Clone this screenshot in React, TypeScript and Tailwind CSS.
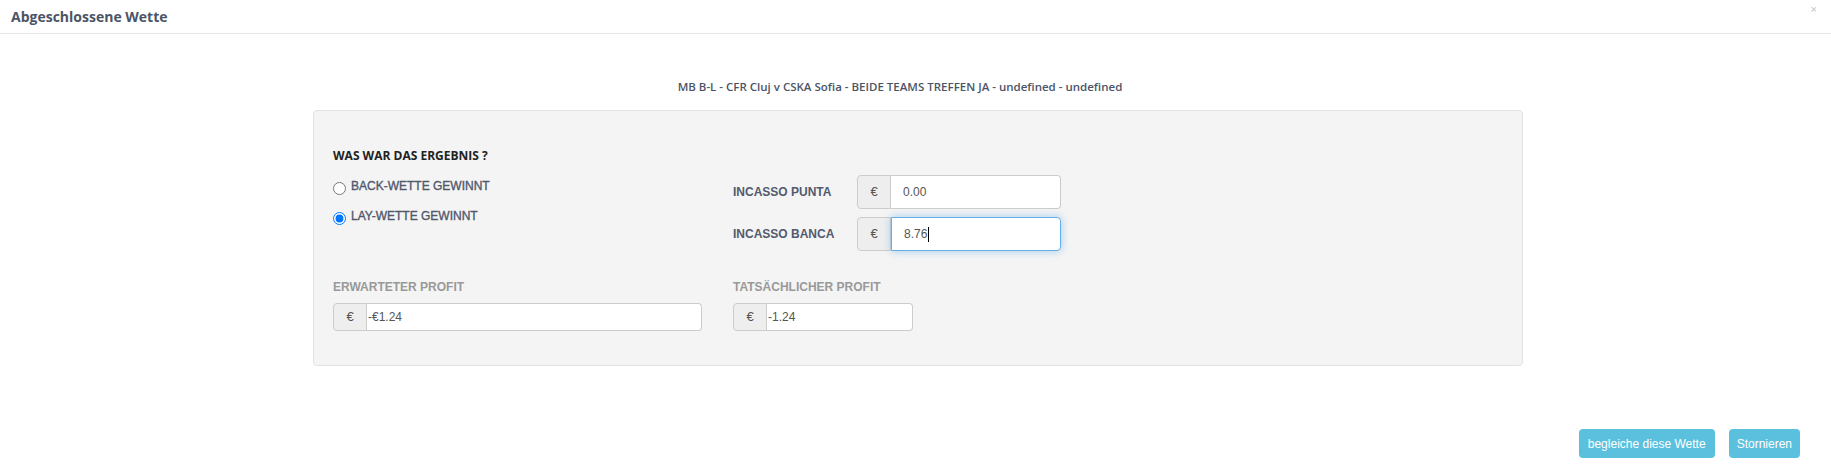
import React from 'react';

const sans = "font-['Liberation_Sans',Arial,sans-serif]";
const open = "font-['Open_Sans',sans-serif]";

const EuroAddon: React.FC = () => (
  <span className="flex w-[34px] shrink-0 items-center justify-center rounded-l-[4px] border border-[#ccc] bg-[#eee] text-[13px] text-[#555]">
    €
  </span>
);

const App: React.FC = () => {
  return (
    <div className={`min-h-[467px] w-full bg-white ${sans}`}>
      {/* Modal header */}
      <div className="flex h-[34px] items-center justify-between border-b border-[#e5e5e5] pl-[11px] pr-[14px]">
        <h4 className={`${open} text-[14px] font-bold text-[#4b5467]`}>Abgeschlossene Wette</h4>
        <button className="-mt-[14px] text-[11px] font-bold leading-none text-black/20">×</button>
      </div>

      {/* Modal body */}
      <div className="flex justify-center pl-[5px] pt-[44px]">
        <div className="w-[1210px]">
          <p className={`${open} pr-[36px] text-center text-[11.5px] font-semibold leading-[17px] text-[#4b5467]`}>
            MB B-L - CFR Cluj v CSKA Sofia - BEIDE TEAMS TREFFEN JA - undefined - undefined
          </p>

          <div className="mt-[15px] rounded-[4px] border border-[#e3e3e3] bg-[#f4f4f4] px-[19px] pb-[34px] pt-[35px]">
            <div className="flex">
              {/* Result */}
              <div className="w-[400px]">
                <div className={`${open} text-[12px] font-bold leading-[20px] text-[#222]`}>
                  WAS WAR DAS ERGEBNIS ?
                </div>
                <label className="mt-[12px] flex h-[20px] items-start gap-[5px] text-[12px] text-[#50586c] [-webkit-text-stroke:0.35px_#50586c]">
                  <input type="radio" name="result" className="mt-[4px] h-[13px] w-[13px]" />
                  <span className="leading-[16px]">BACK-WETTE GEWINNT</span>
                </label>
                <label className="mt-[10px] flex h-[20px] items-start gap-[5px] text-[12px] text-[#50586c] [-webkit-text-stroke:0.35px_#50586c]">
                  <input type="radio" name="result" defaultChecked className="mt-[4px] h-[13px] w-[13px]" />
                  <span className="leading-[16px]">LAY-WETTE GEWINNT</span>
                </label>
              </div>

              {/* Incasso */}
              <div className="flex flex-col gap-[8px] pt-[29px]">
                <div className="flex items-center">
                  <span className="w-[124px] text-[12px] font-bold text-[#525a6e]">INCASSO PUNTA</span>
                  <div className="flex h-[34px] w-[204px]">
                    <EuroAddon />
                    <div className="flex flex-1 items-center rounded-r-[4px] border border-l-0 border-[#ccc] bg-white px-[12px] text-[12px] text-[#555]">
                      0.00
                    </div>
                  </div>
                </div>
                <div className="flex items-center">
                  <span className="w-[124px] text-[12px] font-bold text-[#525a6e]">INCASSO BANCA</span>
                  <div className="flex h-[34px] w-[204px]">
                    <EuroAddon />
                    <div className="flex flex-1 items-center rounded-r-[4px] border border-[#66afe9] bg-white px-[12px] text-[12px] text-[#555] shadow-[0_0_8px_rgba(102,175,233,0.6)]">
                      8.76
                      <span className="ml-px h-[15px] w-px bg-black" />
                    </div>
                  </div>
                </div>
              </div>
            </div>

            {/* Profit */}
            <div className="mt-[26px] flex">
              <div className="w-[400px]">
                <div className="text-[12px] font-bold leading-[20px] text-[#999]">ERWARTETER PROFIT</div>
                <div className="mt-[6px] flex h-[28px] w-[369px]">
                  <EuroAddon />
                  <div className="flex flex-1 items-center rounded-r-[4px] border border-l-0 border-[#ccc] bg-white px-px text-[12px] text-[#555]">
                    -€1.24
                  </div>
                </div>
              </div>
              <div>
                <div className="text-[12px] font-bold leading-[20px] text-[#999]">TATSÄCHLICHER PROFIT</div>
                <div className="mt-[6px] flex h-[28px] w-[180px]">
                  <EuroAddon />
                  <div className="flex flex-1 items-center rounded-r-[4px] border border-l-0 border-[#ccc] bg-white px-px text-[12px] text-[#555]">
                    -1.24
                  </div>
                </div>
              </div>
            </div>
          </div>
        </div>
      </div>

      {/* Footer */}
      <div className="mt-[63px] flex justify-end gap-[14px] pr-[31px]">
        <button className="h-[29px] rounded-[4px] bg-[#5bc0de] px-[9px] text-[12px] text-white">
          begleiche diese Wette
        </button>
        <button className="h-[29px] rounded-[4px] bg-[#5bc0de] px-[8px] text-[12px] text-white">
          Stornieren
        </button>
      </div>
    </div>
  );
};

export default App;
